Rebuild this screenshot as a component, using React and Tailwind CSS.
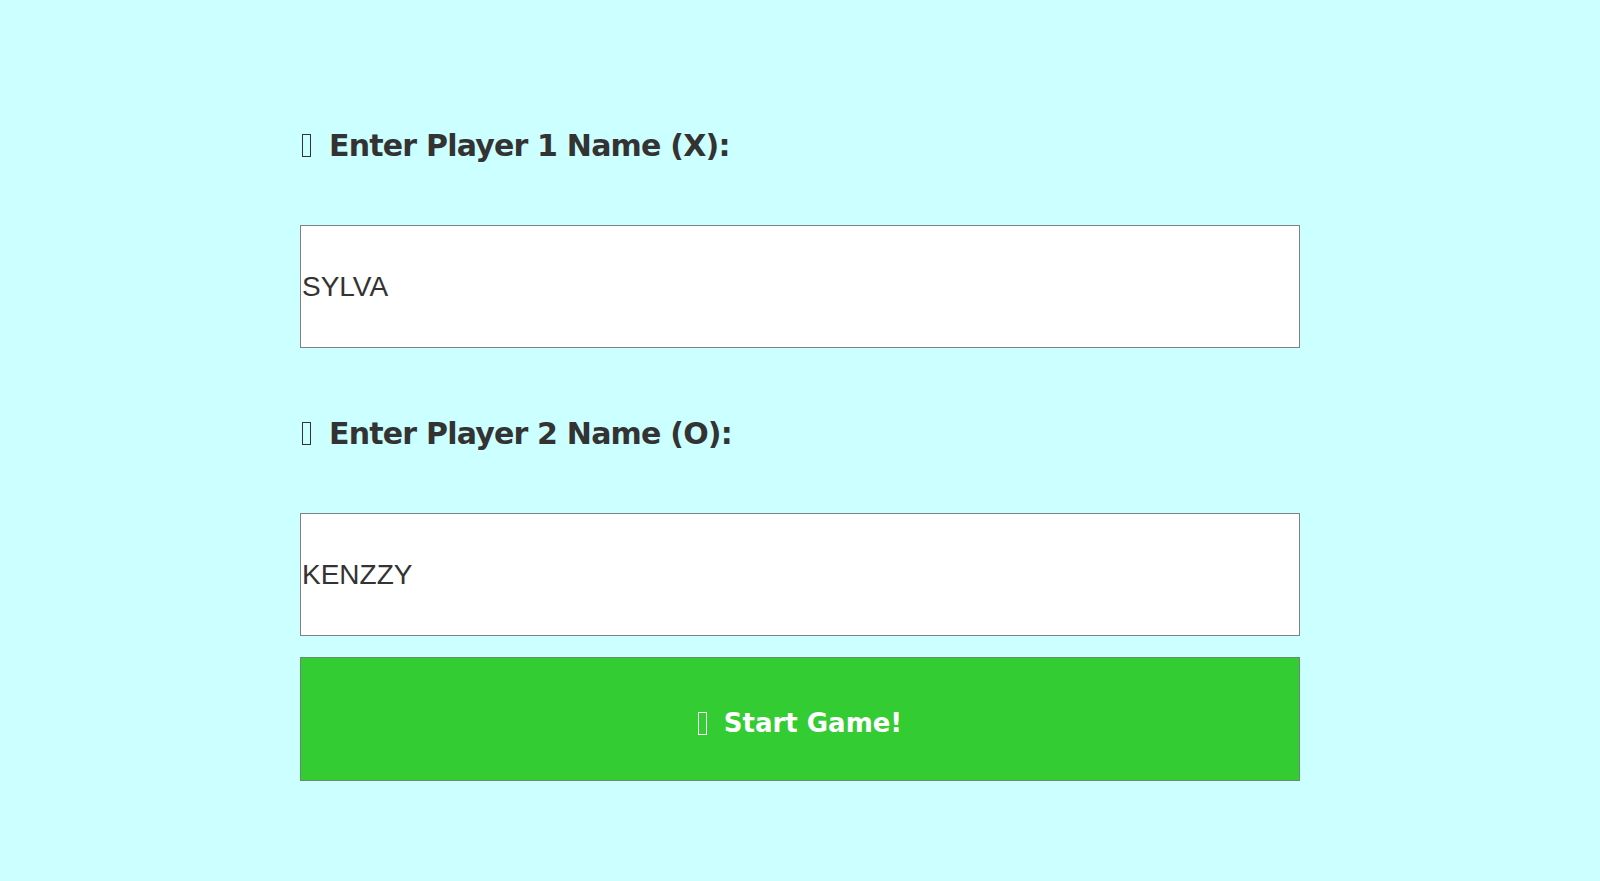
import React, { useState } from 'react';

const COMIC = { fontFamily: '"Comic Sans MS", "DejaVu Sans", sans-serif' };

// missing-glyph box, as the emoji shows in the reference
function Tofu({ className = '' }) {
  return <span className={`inline-block w-[9px] h-[23px] border-[1.5px] align-[-3px] ${className}`} />;
}

export default function App() {
  const [p1, setP1] = useState('SYLVA');
  const [p2, setP2] = useState('KENZZY');

  return (
    <div className="min-h-[881px] bg-[#ccffff] pt-[125px]">
      <div className="w-[1000px] mx-auto flex flex-col">
        <label style={COMIC} className="h-[40px] flex items-center text-[30px] font-bold text-[#333] tracking-[-0.8px]">
          <Tofu className="border-[#333] ml-[2px] mr-[18px]" />
          Enter Player 1 Name (X):
        </label>
        <input
          value={p1}
          onChange={(e) => setP1(e.target.value)}
          className="mt-[60px] h-[123px] w-full bg-white border border-[#808080] px-[1px] text-[28px] text-[#333] outline-none"
          style={{ fontFamily: '"Liberation Sans", Arial, sans-serif' }}
        />

        <label style={COMIC} className="mt-[65px] h-[40px] flex items-center text-[30px] font-bold text-[#333] tracking-[-0.8px]">
          <Tofu className="border-[#333] ml-[2px] mr-[18px]" />
          Enter Player 2 Name (O):
        </label>
        <input
          value={p2}
          onChange={(e) => setP2(e.target.value)}
          className="mt-[60px] h-[123px] w-full bg-white border border-[#808080] px-[1px] text-[28px] text-[#333] outline-none"
          style={{ fontFamily: '"Liberation Sans", Arial, sans-serif' }}
        />

        <button
          style={COMIC}
          className="mt-[21px] h-[124px] w-full bg-[#33cc33] border border-[#6a8a6a] pt-[8px] text-white text-[26px] font-bold flex items-center justify-center"
        >
          <Tofu className="border-white mr-[17px]" />
          Start Game!
        </button>
      </div>
    </div>
  );
}
